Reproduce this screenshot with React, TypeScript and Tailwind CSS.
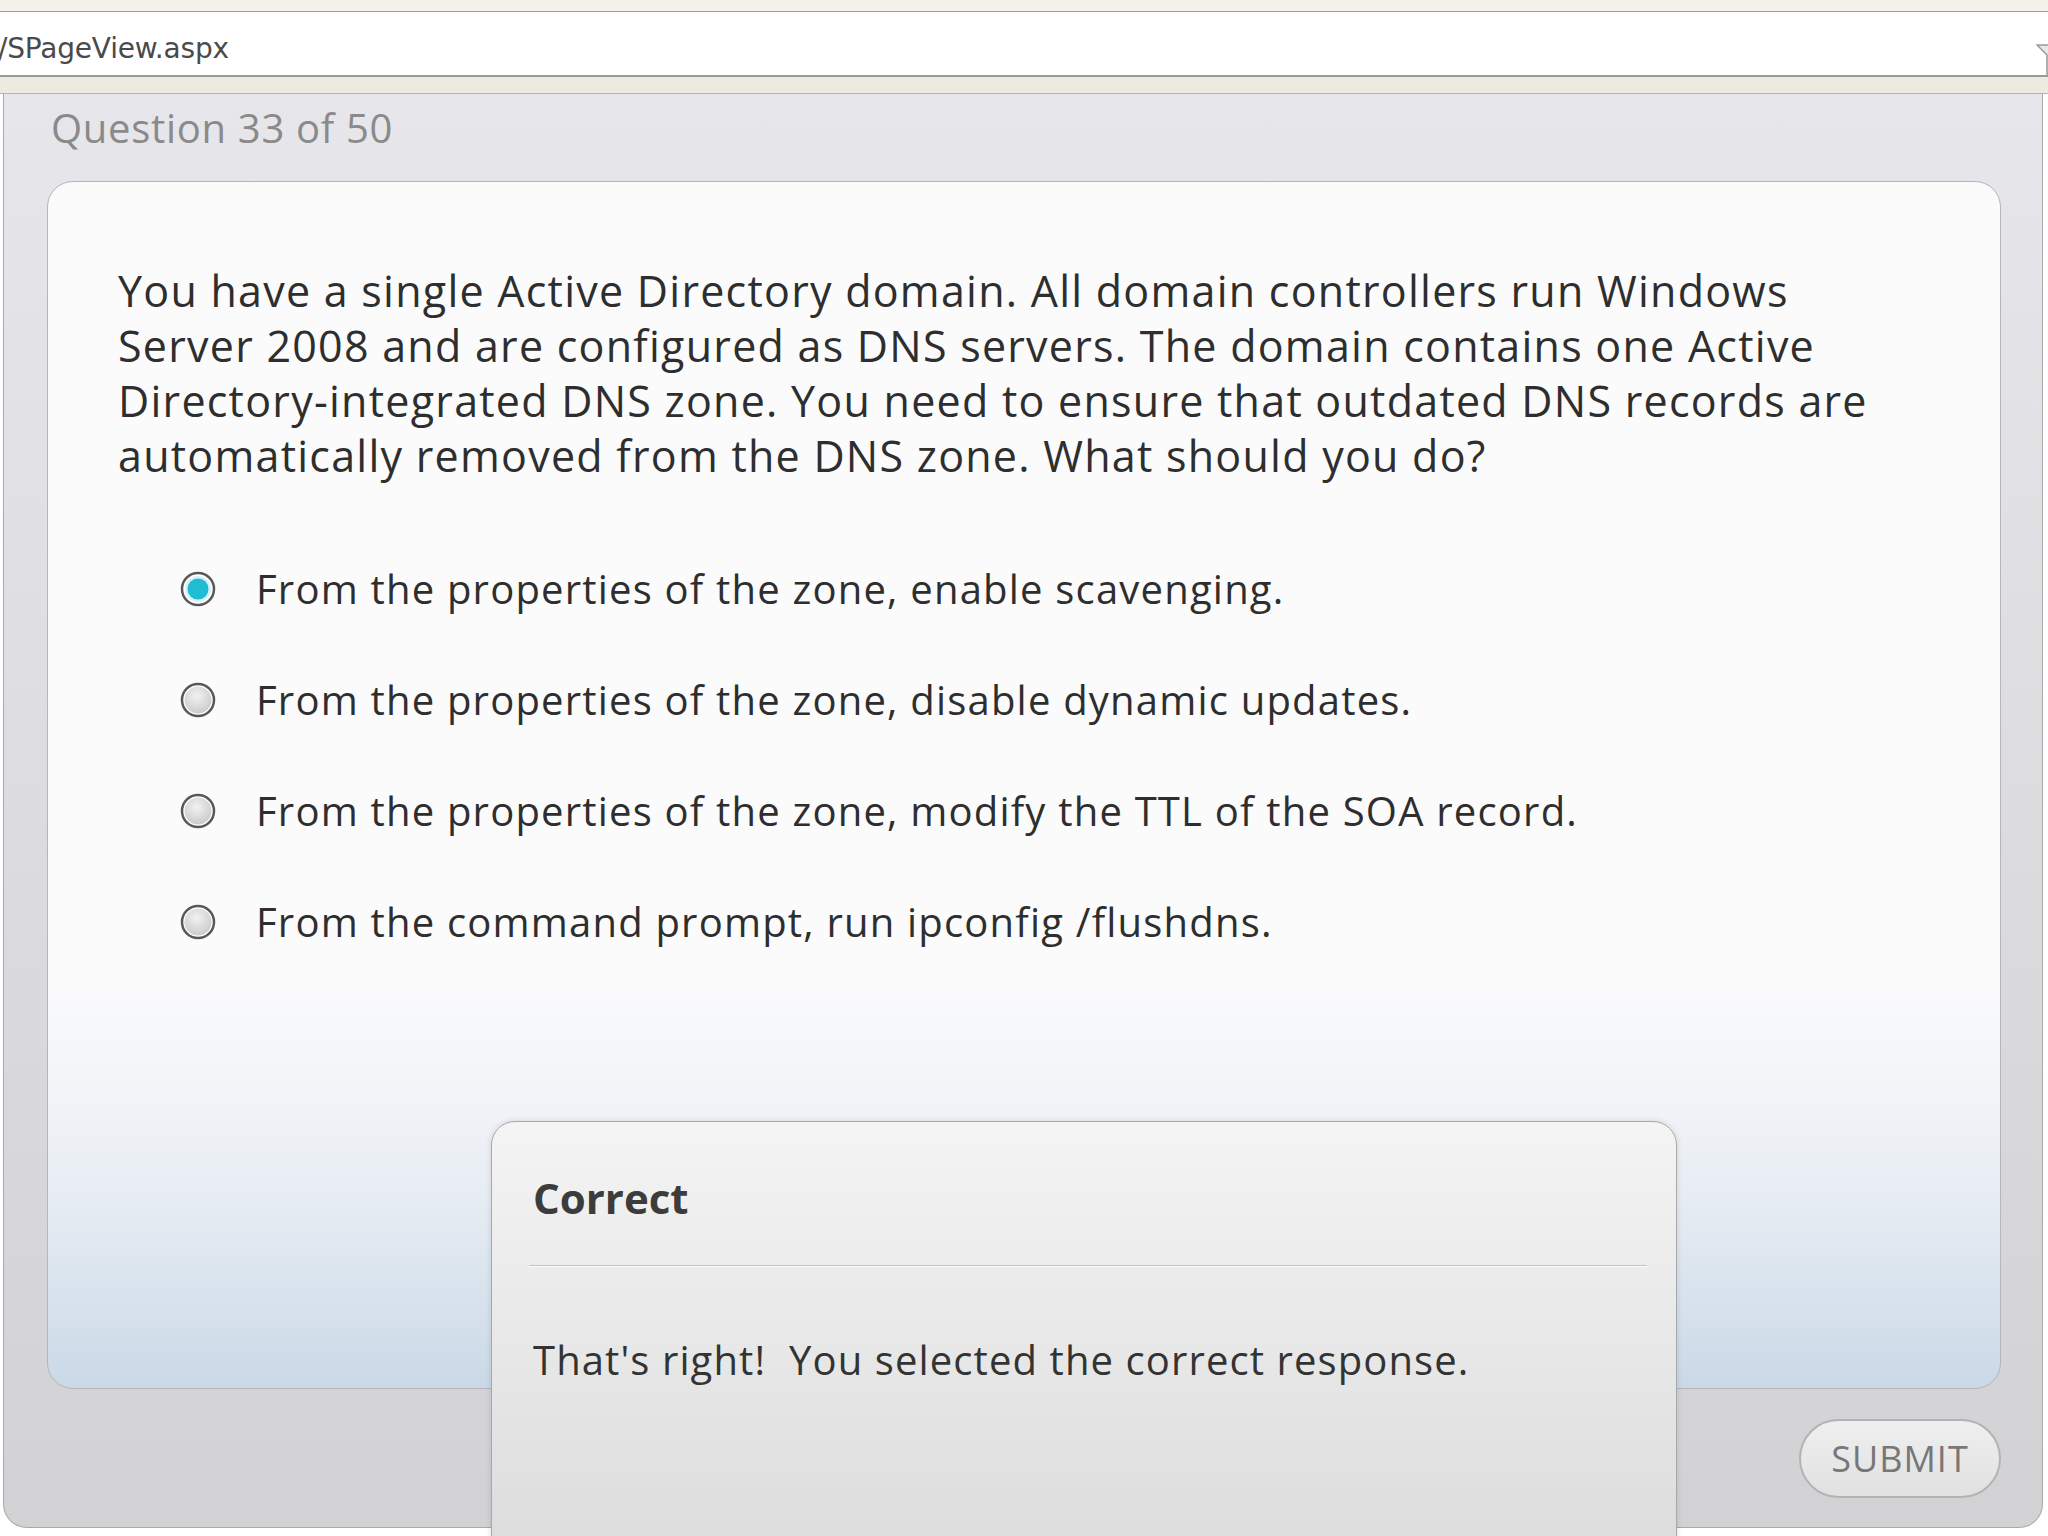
import React from "react";

const QUESTION_LINES = [
  "You have a single Active Directory domain. All domain controllers run Windows",
  "Server 2008 and are configured as DNS servers. The domain contains one Active",
  "Directory-integrated DNS zone. You need to ensure that outdated DNS records are",
  "automatically removed from the DNS zone. What should you do?",
];

const OPTIONS = [
  "From the properties of the zone, enable scavenging.",
  "From the properties of the zone, disable dynamic updates.",
  "From the properties of the zone, modify the TTL of the SOA record.",
  "From the command prompt, run ipconfig /flushdns.",
];

function Radio({ checked }: { checked: boolean }) {
  return (
    <svg width="36" height="36" viewBox="0 0 36 36" className="shrink-0">
      <defs>
        <radialGradient id="rg" cx="45%" cy="35%" r="70%">
          <stop offset="0%" stopColor="#f2f2f2" />
          <stop offset="100%" stopColor="#c8c8c8" />
        </radialGradient>
      </defs>
      <circle cx="18" cy="18" r="16" fill="#ffffff" stroke="#585858" strokeWidth="2.5" />
      {checked ? (
        <>
          <circle cx="18" cy="18" r="13" fill="#d6f2f7" />
          <circle cx="18" cy="18" r="10.5" fill="#1fbcd3" />
        </>
      ) : (
        <circle cx="18" cy="18" r="13.5" fill="url(#rg)" />
      )}
    </svg>
  );
}

export default function App() {
  return (
    <div className="relative w-[2048px] h-[1536px] overflow-hidden bg-white font-['Open_Sans',sans-serif]">
      {/* browser chrome */}
      <div className="h-[12px] bg-[#f3f1eb] border-b border-[#9d9d9d]" />
      <div className="h-[65px] bg-white flex items-center relative border-b-2 border-[#9a9a9a] pt-[10px]">
        <span className="-ml-[2px] text-[28px] text-[#4a4a4a] font-['DejaVu_Sans',sans-serif] tracking-[-0.2px]">
          /SPageView.aspx
        </span>
        <svg className="absolute right-[-14px] top-[30px]" width="26" height="34" viewBox="0 0 26 34">
          <path d="M1 3 L25 3 L16 13 L16 32 L11 32 L11 13 Z" fill="#e8e8e8" stroke="#9a9a9a" strokeWidth="1.5" />
        </svg>
      </div>
      <div className="h-[17px] bg-[#ecebe0] border-b border-[#b3b3b3]" />

      {/* main panel */}
      <div className="ml-[3px] w-[2040px] h-[1434px] border-l border-r border-b border-[#a9a9a9] rounded-b-[24px] bg-gradient-to-b from-[#e7e6ea] to-[#d2d2d4] pl-[43px] pr-[41px] pt-[14px]">
        <div className="h-[40px] leading-[40px] text-[40px] tracking-[0.7px] text-[#8a8a8a] pl-[4px]">
          Question 33 of 50
        </div>

        <div className="mt-[33px] h-[1208px] rounded-[26px] border border-[#b6b6b8] bg-[linear-gradient(to_bottom,#fbfbfc_0%,#fbfbfc_66%,#e9eef4_83%,#cad9e7_100%)] pl-[70px] pt-[81px]">
          <div className="text-[43px] leading-[55px] tracking-[1.25px] text-[#2e2e2e]">
            {QUESTION_LINES.map((l) => (
              <div key={l} className="whitespace-nowrap">
                {l}
              </div>
            ))}
          </div>

          <div className="mt-[50px] flex flex-col">
            {OPTIONS.map((o, i) => (
              <div key={o} className="h-[111px] flex items-center pl-[62px] gap-[40px]">
                <Radio checked={i === 0} />
                <span className="text-[40px] tracking-[1.2px] text-[#2e2e2e] whitespace-nowrap">{o}</span>
              </div>
            ))}
          </div>
        </div>

        <div className="mt-[30px] flex justify-end">
          <div className="w-[202px] h-[79px] rounded-full border-2 border-[#b3b3b3] bg-gradient-to-b from-[#efefef] to-[#e1e1e1] flex items-center justify-center text-[36px] text-[#777777] tracking-[1px]">
            SUBMIT
          </div>
        </div>
      </div>

      {/* feedback popup */}
      <div className="absolute left-[491px] top-[1121px] w-[1186px] h-[440px] rounded-t-[24px] border border-[#a8a8a8] bg-gradient-to-b from-[#f4f4f4] to-[#dcdcdc] shadow-[0_0_6px_rgba(0,0,0,0.12)]">
        <div className="pl-[41px] pt-[51px] text-[42px] leading-[50px] font-bold text-[#3c3c3c]">Correct</div>
        <div className="mt-[42px] ml-[37px] mr-[29px] h-[2px] bg-[#c2c2c2] border-b border-white" />
        <div className="pl-[41px] mt-[68px] text-[40px] leading-[50px] tracking-[1.1px] text-[#333333] whitespace-pre">
          {"That's right!  You selected the correct response."}
        </div>
      </div>
    </div>
  );
}
